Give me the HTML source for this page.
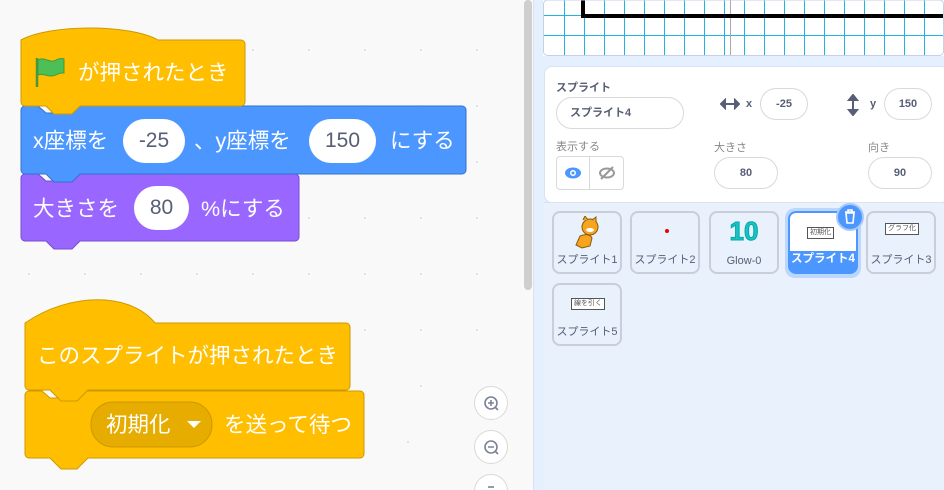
<!DOCTYPE html>
<html style="overflow:hidden;width:944px;height:490px"><head><meta charset="utf-8"><style>
*{margin:0;padding:0;box-sizing:border-box}
body{width:944px;height:490px;overflow:hidden;position:relative;background:#f9f9f9;font-family:"Liberation Sans","Noto Sans CJK JP",sans-serif}
.abs{position:absolute}
.t{position:absolute;color:#fff;font-size:21.5px;white-space:nowrap;line-height:24px}
.ov{position:absolute;background:#fff;border-radius:22px;color:#575e75;font-size:21px;text-align:center;line-height:44px;height:44px}
.lbl{position:absolute;font-size:11px;color:#575e75;white-space:nowrap}
.inp{position:absolute;background:#fff;border:1px solid #d9d9d9;border-radius:16px;font-size:11px;color:#575e75;text-align:center;font-weight:bold}
.tile{position:absolute;width:70px;height:63px;border:2px solid #c9ced9;border-radius:8px;background:#e9f1fc;font-size:11px;color:#575e75;text-align:center;white-space:nowrap}
.tile span{position:absolute;bottom:5px;left:0;right:0}
.mini{position:absolute;border:1px solid #555;background:#fff;font-size:7px;color:#555;padding:0 2px;line-height:10px}
.zb{position:absolute;width:34px;height:34px;border-radius:50%;background:#fff;border:1px solid #d9d9d9}
</style></head><body>
<svg class="abs" style="left:0;top:0" width="533" height="490">
<g fill="#dcdcdc">
<circle cx="253" cy="50" r="1"/><circle cx="309" cy="50" r="1"/><circle cx="365" cy="50" r="1"/><circle cx="421" cy="50" r="1"/><circle cx="477" cy="50" r="1"/>
<circle cx="253" cy="106" r="1"/><circle cx="309" cy="106" r="1"/><circle cx="365" cy="106" r="1"/><circle cx="421" cy="106" r="1"/><circle cx="477" cy="106" r="1"/>
<circle cx="477" cy="162" r="1"/><circle cx="309" cy="218" r="1"/><circle cx="365" cy="218" r="1"/><circle cx="421" cy="218" r="1"/><circle cx="477" cy="218" r="1"/>
<circle cx="29" cy="274" r="1"/><circle cx="85" cy="274" r="1"/><circle cx="141" cy="274" r="1"/><circle cx="197" cy="274" r="1"/><circle cx="253" cy="274" r="1"/><circle cx="309" cy="274" r="1"/><circle cx="365" cy="274" r="1"/><circle cx="421" cy="274" r="1"/><circle cx="477" cy="274" r="1"/>
<circle cx="365" cy="330" r="1"/><circle cx="421" cy="330" r="1"/><circle cx="477" cy="330" r="1"/>
<circle cx="421" cy="386" r="1"/><circle cx="408" cy="442" r="1"/>
</g>
<path d="M21,178 a4,4 0 0 1 4,-4 H38 l8,7 h18 l8,-7 H295 a4,4 0 0 1 4,4 V237 a4,4 0 0 1 -4,4 H80 l-8,8 h-18 l-8,-8 H25 a4,4 0 0 1 -4,-4 Z" fill="#9966ff" stroke="#774dcb"/>
<path d="M21,110 a4,4 0 0 1 4,-4 H38 l8,7 h18 l8,-7 H462 a4,4 0 0 1 4,4 V170 a4,4 0 0 1 -4,4 H80 l-8,8 h-18 l-8,-8 H25 a4,4 0 0 1 -4,-4 Z" fill="#4c97ff" stroke="#3373cc"/>
<path d="M21,40 C50,24 130,24 158,40 H241 a4,4 0 0 1 4,4 V102 a4,4 0 0 1 -4,4 H80 l-8,8 h-18 l-8,-8 H25 a4,4 0 0 1 -4,-4 Z" fill="#ffbf00" stroke="#cc9900"/>
<path d="M25,395 a4,4 0 0 1 4,-4 H42 l8,7 h26 l8,-7 H360 a4,4 0 0 1 4,4 V454 a4,4 0 0 1 -4,4 H88 l-11,11 h-16 l-11,-11 H29 a4,4 0 0 1 -4,-4 Z" fill="#ffbf00" stroke="#cc9900"/>
<path d="M25,323 C70,292 130,292 155,323 H346 a4,4 0 0 1 4,4 V386 a4,4 0 0 1 -4,4 H88 l-11,11 h-16 l-11,-11 H29 a4,4 0 0 1 -4,-4 Z" fill="#ffbf00" stroke="#cc9900"/>
<rect x="91" y="402" width="121" height="45" rx="22" fill="#e6ac00" stroke="#cc9900"/>
<path d="M187,421 h14 l-7,7 z" fill="#fff"/>
<path d="M37,58 V87" stroke="#45993d" stroke-width="2.5"/>
<path d="M38,60 c6,-4 12,4 18,0 c4,-2 6,-2 8,-1 v14 c-4,-1 -8,3 -13,3 c-6,0 -8,-3 -13,-1 z" fill="#4cbf56" stroke="#45993d"/>
<rect x="524" y="0" width="8" height="290" rx="4" fill="#cfcfcf"/>
</svg>
<div class="t" style="left:78px;top:61px">が押されたとき</div>
<div class="t" style="left:33px;top:129px">x座標を</div>
<div class="ov" style="left:123px;top:119px;width:62px">-25</div>
<div class="t" style="left:194px;top:129px">、y座標を</div>
<div class="ov" style="left:309px;top:119px;width:67px">150</div>
<div class="t" style="left:390px;top:129px">にする</div>
<div class="t" style="left:33px;top:197px">大きさを</div>
<div class="ov" style="left:134px;top:186px;width:55px">80</div>
<div class="t" style="left:201px;top:197px">%にする</div>
<div class="t" style="left:37px;top:344px">このスプライトが押されたとき</div>
<div class="t" style="left:106px;top:413px">初期化</div>
<div class="t" style="left:224px;top:413px">を送って待つ</div>
<div class="zb" style="left:474px;top:386px"><svg width="34" height="34"><circle cx="16" cy="16" r="6" fill="none" stroke="#7a8296" stroke-width="1.6"/><path d="M16,13v6M13,16h6M20,20l3,3" stroke="#7a8296" stroke-width="1.6"/></svg></div>
<div class="zb" style="left:474px;top:430px"><svg width="34" height="34"><circle cx="16" cy="16" r="6" fill="none" stroke="#7a8296" stroke-width="1.6"/><path d="M13,16h6M20,20l3,3" stroke="#7a8296" stroke-width="1.6"/></svg></div>
<div class="zb" style="left:474px;top:474px"><svg width="34" height="34"><path d="M13,12h6" stroke="#7a8296" stroke-width="1.6"/></svg></div>

<div class="abs" style="left:533px;top:0;width:411px;height:490px;background:#e5f0ff;border-left:1px solid #d9e3f2"></div>
<svg class="abs" style="left:543px;top:0" width="401" height="56">
<rect width="401" height="56" fill="#fff"/>
<g stroke="#1eb4e6" stroke-width="1">
<path d="M0.5,15.5H401M0.5,35.5H401"/>
<path d="M21.5,0V56M41.5,0V56M61.5,0V56M81.5,0V56M101.5,0V56M121.5,0V56M141.5,0V56M161.5,0V56M181.5,0V56M201.5,0V56M221.5,0V56M241.5,0V56M261.5,0V56M281.5,0V56M301.5,0V56M321.5,0V56M341.5,0V56M361.5,0V56M381.5,0V56"/>
</g>
<path d="M187.5,0V56" stroke="#aaa"/>
<path d="M40,0V16H401" fill="none" stroke="#000" stroke-width="4"/>
<rect x="0.5" y="0" width="400" height="55.5" rx="4" fill="none" stroke="#c6d2e4"/>
</svg>
<div class="abs" style="left:544px;top:66px;width:405px;height:137px;background:#fff;border:1px solid #d9e3f2;border-radius:8px"></div>
<div class="lbl" style="left:556px;top:79px;font-weight:bold">スプライト</div>
<div class="inp" style="left:556px;top:97px;width:128px;height:32px;line-height:30px;text-align:left;padding-left:13px">スプライト4</div>
<svg class="abs" style="left:720px;top:98px" width="20" height="12"><path d="M3,6H17M1,6l4,-4v8zM19,6l-4,-4v8z" stroke="#575e75" stroke-width="2" fill="#575e75"/></svg>
<div class="lbl" style="left:746px;top:98px;font-weight:bold">x</div>
<div class="inp" style="left:760px;top:88px;width:48px;height:32px;line-height:30px">-25</div>
<svg class="abs" style="left:847px;top:94px" width="12" height="22"><path d="M6,3V19M6,1l-4,5h8zM6,21l-4,-5h8z" stroke="#575e75" stroke-width="2" fill="#575e75"/></svg>
<div class="lbl" style="left:870px;top:98px;font-weight:bold">y</div>
<div class="inp" style="left:884px;top:88px;width:48px;height:32px;line-height:30px">150</div>
<div class="lbl" style="left:556px;top:138px;color:#888">表示する</div>
<div class="abs" style="left:556px;top:156px;width:68px;height:34px;border:1px solid #d9d9d9;border-radius:4px;background:#fff"></div>
<div class="abs" style="left:589px;top:156px;width:1px;height:34px;background:#d9d9d9"></div>
<svg class="abs" style="left:564px;top:164px" width="18" height="18"><ellipse cx="9" cy="9" rx="8" ry="5.5" fill="#4c97ff"/><circle cx="9" cy="9" r="3" fill="#fff"/><circle cx="9" cy="9" r="1.5" fill="#4c97ff"/></svg>
<svg class="abs" style="left:598px;top:164px" width="18" height="18"><ellipse cx="9" cy="9" rx="7" ry="4.5" fill="none" stroke="#999" stroke-width="2"/><path d="M3,15L15,3" stroke="#999" stroke-width="2"/></svg>
<div class="lbl" style="left:714px;top:139px;color:#888">大きさ</div>
<div class="inp" style="left:714px;top:157px;width:64px;height:32px;line-height:30px">80</div>
<div class="lbl" style="left:868px;top:139px;color:#888">向き</div>
<div class="inp" style="left:868px;top:157px;width:64px;height:32px;line-height:30px">90</div>
<div class="abs" style="left:544px;top:202px;width:400px;height:288px;background:#e9f1fc;border-top:1px solid #d9e3f2"></div>

<div class="tile" style="left:552px;top:211px"><svg class="abs" style="left:16px;top:3px" width="34" height="34"><circle cx="20" cy="11" r="8" fill="#f7a51e" stroke="#8a5a0c"/><path d="M13,4l2,-4 3,4M22,4l4,-3 0,5" fill="#f7a51e" stroke="#8a5a0c"/><path d="M10,20 c5,-2 10,-2 12,2 l-2,8 -8,2 -6,-3z" fill="#f7a51e" stroke="#8a5a0c"/><ellipse cx="20" cy="14" rx="4" ry="2" fill="#fff"/></svg><span>スプライト1</span></div>
<div class="tile" style="left:630px;top:211px"><div class="abs" style="left:33px;top:16px;width:4px;height:4px;border-radius:50%;background:#e00"></div><span>スプライト2</span></div>
<div class="tile" style="left:709px;top:211px"><div class="abs" style="left:0;right:0;top:3px;font-size:26px;font-weight:bold;color:#19c3c3;-webkit-text-stroke:1px #0aa">10</div><span>Glow-0</span></div>
<div class="abs" style="left:785px;top:208px;width:76px;height:70px;border-radius:10px;background:#bcd7fd"></div>
<div class="tile" style="left:788px;top:211px;border-color:#4c97ff;background:#4c97ff;color:#fff"><div class="abs" style="left:0;top:0;right:0;height:38px;background:#fff;border-radius:6px 6px 0 0"></div><div class="mini" style="left:17px;top:14px">初期化</div><span style="font-size:11.5px;bottom:6px;font-weight:bold">スプライト4</span></div>
<div class="abs" style="left:836px;top:203px;width:28px;height:28px;border-radius:50%;background:#4c97ff;border:2px solid #a7c9fb"><svg width="24" height="24"><path d="M7,7h10M10,7v-2h4v2M8,8l1,10h6l1,-10z" fill="none" stroke="#fff" stroke-width="1.6"/><path d="M10.5,11l3,3M13.5,11l-3,3" stroke="#4c97ff" stroke-width="1.2"/></svg></div>
<div class="tile" style="left:866px;top:211px"><div class="mini" style="left:17px;top:10px">グラフ化</div><span>スプライト3</span></div>
<div class="tile" style="left:552px;top:283px"><div class="mini" style="left:17px;top:13px">線を引く</div><span>スプライト5</span></div>
</body></html>
